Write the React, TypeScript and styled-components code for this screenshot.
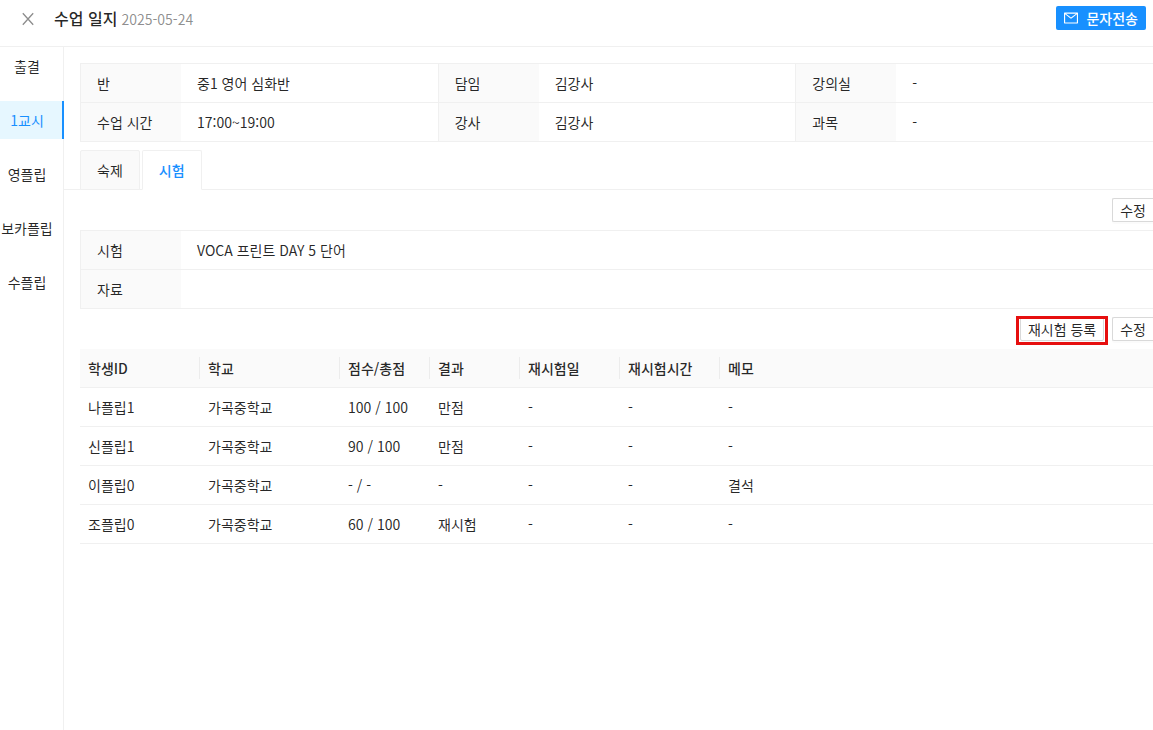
import React from "react";
import styled, { createGlobalStyle } from "styled-components";

const line = "#f0f0f0";
const blue = "#1890ff";
const shade = "#fafafa";
const ink = "rgba(0, 0, 0, 0.85)";

const GlobalStyle = createGlobalStyle`
  *, *::before, *::after { box-sizing: border-box; }
  html, body, #root { min-height: 100%; }
  body {
    margin: 0;
    background: #fff;
    color: ${ink};
    font-family: "Noto Sans CJK KR", "Noto Sans", sans-serif;
    font-size: 14px;
    line-height: 22px;
  }
  button { font: inherit; color: inherit; cursor: pointer; }
`;

const Page = styled.div`
  display: flex;
  flex-direction: column;
  min-height: 100vh;
`;

const Header = styled.header`
  display: flex;
  align-items: flex-start;
  padding: 6px 7px 15px 21px;
  border-bottom: 1px solid ${line};
`;

const CloseButton = styled.button`
  display: flex;
  padding: 0;
  margin: 6px 19px 0 0;
  border: 0;
  background: none;
  color: rgba(0, 0, 0, 0.45);
`;

const Heading = styled.div`
  display: flex;
  align-items: baseline;
  flex: 1;
  gap: 4px;
  line-height: 24px;
`;

const Title = styled.h1`
  margin: 0;
  font-size: 16px;
  font-weight: 500;
`;

const DateText = styled.time`
  color: rgba(0, 0, 0, 0.45);
`;

const SendButton = styled.button`
  display: flex;
  align-items: center;
  gap: 8px;
  height: 24px;
  padding: 0 8px;
  border: 0;
  border-radius: 2px;
  background: ${blue};
  color: #fff;
  font-weight: 500;
  white-space: nowrap;
`;

const Body = styled.div`
  display: flex;
  flex: 1;
`;

const SideNav = styled.nav`
  display: flex;
  flex-direction: column;
  gap: 16px;
  flex: 0 0 64px;
  box-shadow: inset -1px 0 ${line};
`;

const SideItem = styled.button<{ $active?: boolean }>`
  height: 38px;
  padding: 0 8px 0 0;
  border: 0;
  border-right: 2px solid ${(p) => (p.$active ? blue : "transparent")};
  background: ${(p) => (p.$active ? "#e6f7ff" : "transparent")};
  color: ${(p) => (p.$active ? blue : "inherit")};
  white-space: nowrap;
`;

const Main = styled.main`
  flex: 1;
  min-width: 0;
  padding-top: 16px;
`;

const Section = styled.section`
  padding-left: 16px;
`;

const InfoTable = styled.table`
  width: 100%;
  table-layout: fixed;
  border-spacing: 0;
  border-top: 1px solid ${line};
`;

const InfoLabel = styled.th`
  width: 101px;
  height: 39px;
  padding: 0 16px;
  border-left: 1px solid ${line};
  border-bottom: 1px solid ${line};
  background: ${shade};
  font-weight: 400;
  text-align: left;
`;

const InfoValue = styled.td`
  padding: 0 16px;
  border-bottom: 1px solid ${line};
`;

const TabList = styled.div`
  display: flex;
  gap: 2px;
  margin-top: 8px;
  padding-left: 16px;
  box-shadow: inset 0 -1px ${line};
`;

const Tab = styled.button<{ $active?: boolean }>`
  height: 40px;
  padding: 0 16px;
  border: 1px solid ${line};
  border-bottom-color: ${(p) => (p.$active ? "#fff" : line)};
  border-radius: 2px 2px 0 0;
  background: ${(p) => (p.$active ? "#fff" : shade)};
  color: ${(p) => (p.$active ? blue : "inherit")};
  font-weight: ${(p) => (p.$active ? 500 : 400)};
`;

const Actions = styled.div`
  display: flex;
  justify-content: flex-end;
  gap: 8px;
  padding: 8px 0;
`;

const SmallButton = styled.button<{ $flush?: boolean }>`
  height: 24px;
  padding: 0 7px;
  border: 1px solid #d9d9d9;
  border-right-width: ${(p) => (p.$flush ? "0" : "1px")};
  border-radius: ${(p) => (p.$flush ? "2px 0 0 2px" : "2px")};
  background: #fff;
  box-shadow: 0 2px 0 rgba(0, 0, 0, 0.016);
  white-space: nowrap;
`;

const Highlight = styled.div`
  position: relative;
  display: flex;

  &::after {
    content: "";
    position: absolute;
    inset: -1px -4px -4px;
    border: 3px solid #e60f0f;
    pointer-events: none;
  }
`;

const ScoreTable = styled.table`
  width: 100%;
  table-layout: fixed;
  border-spacing: 0;
`;

const HeadCell = styled.th<{ $width?: number }>`
  width: ${(p) => (p.$width ? `${p.$width}px` : "auto")};
  height: 39px;
  padding: 0 8px;
  border-bottom: 1px solid ${line};
  background: ${shade};
  font-weight: 500;
  text-align: left;
  white-space: nowrap;

  &:not(:last-child) {
    padding-right: 0;
  }
`;

const HeadText = styled.div<{ $divided: boolean }>`
  border-right: ${(p) => (p.$divided ? "1px solid #ececec" : "0")};
`;

const Cell = styled.td`
  height: 39px;
  padding: 0 8px;
  border-bottom: 1px solid ${line};
  white-space: nowrap;
`;

const CloseIcon = () => (
  <svg width="14" height="14" viewBox="0 0 14 14" fill="none" stroke="currentColor" strokeWidth="1.3" aria-hidden="true">
    <path d="M1.8 1.2 12.2 12.8M12.2 1.2 1.8 12.8" />
  </svg>
);

const MailIcon = () => (
  <svg width="14" height="14" viewBox="64 64 896 896" fill="currentColor" aria-hidden="true">
    <path d="M928 160H96c-17.700 0-32 14.300-32 32v640c0 17.700 14.300 32 32 32h832c17.700 0 32-14.300 32-32V192c0-17.700-14.300-32-32-32zm-40 110.800V792H136V270.800l-27.600-21.500 39.300-50.500 42.800 33.300h643.100l42.800-33.300 39.300 50.500-27.700 21.500zM833.600 232L512 482 190.400 232l-42.800-33.300-39.300 50.500 27.600 21.500 341.600 265.600a55.990 55.990 0 0 0 68.700 0L888 270.800l27.600-21.500-39.300-50.500-42.700 33.200z" />
  </svg>
);

const sideItems = ["출결", "1교시", "영플립", "보카플립", "수플립"];

const classInfo = [
  [["반", "중1 영어 심화반"], ["담임", "김강사"], ["강의실", "-"]],
  [["수업 시간", "17:00~19:00"], ["강사", "김강사"], ["과목", "-"]],
];

const examInfo = [[["시험", "VOCA 프린트 DAY 5 단어"]], [["자료", ""]]];

const columns: { name: string; width?: number }[] = [
  { name: "학생ID", width: 120 },
  { name: "학교", width: 140 },
  { name: "점수/총점", width: 90 },
  { name: "결과", width: 90 },
  { name: "재시험일", width: 100 },
  { name: "재시험시간", width: 100 },
  { name: "메모" },
];

const students = [
  ["나플립1", "가곡중학교", "100 / 100", "만점", "-", "-", "-"],
  ["신플립1", "가곡중학교", "90 / 100", "만점", "-", "-", "-"],
  ["이플립0", "가곡중학교", "- / -", "-", "-", "-", "결석"],
  ["조플립0", "가곡중학교", "60 / 100", "재시험", "-", "-", "-"],
];

const Info = ({ rows }: { rows: string[][][] }) => (
  <InfoTable>
    <tbody>
      {rows.map((row, i) => (
        <tr key={i}>
          {row.map(([label, value]) => (
            <React.Fragment key={label}>
              <InfoLabel scope="row">{label}</InfoLabel>
              <InfoValue>{value}</InfoValue>
            </React.Fragment>
          ))}
        </tr>
      ))}
    </tbody>
  </InfoTable>
);

export default function App() {
  return (
    <>
      <GlobalStyle />
      <Page lang="ko">
        <Header>
          <CloseButton type="button" aria-label="닫기">
            <CloseIcon />
          </CloseButton>
          <Heading>
            <Title>수업 일지</Title>
            <DateText dateTime="2025-05-24">2025-05-24</DateText>
          </Heading>
          <SendButton type="button">
            <MailIcon />
            문자전송
          </SendButton>
        </Header>
        <Body>
          <SideNav>
            {sideItems.map((item) => (
              <SideItem key={item} type="button" $active={item === "1교시"}>
                {item}
              </SideItem>
            ))}
          </SideNav>
          <Main>
            <Section>
              <Info rows={classInfo} />
            </Section>
            <TabList role="tablist">
              <Tab type="button" role="tab" aria-selected={false}>
                숙제
              </Tab>
              <Tab type="button" role="tab" aria-selected $active>
                시험
              </Tab>
            </TabList>
            <Section>
              <Actions>
                <SmallButton type="button" $flush>
                  수정
                </SmallButton>
              </Actions>
              <Info rows={examInfo} />
              <Actions>
                <Highlight>
                  <SmallButton type="button">재시험 등록</SmallButton>
                </Highlight>
                <SmallButton type="button" $flush>
                  수정
                </SmallButton>
              </Actions>
              <ScoreTable>
                <thead>
                  <tr>
                    {columns.map((column, i) => (
                      <HeadCell key={column.name} scope="col" $width={column.width}>
                        <HeadText $divided={i < columns.length - 1}>{column.name}</HeadText>
                      </HeadCell>
                    ))}
                  </tr>
                </thead>
                <tbody>
                  {students.map((student) => (
                    <tr key={student[0]}>
                      {student.map((value, i) => (
                        <Cell key={i}>{value}</Cell>
                      ))}
                    </tr>
                  ))}
                </tbody>
              </ScoreTable>
            </Section>
          </Main>
        </Body>
      </Page>
    </>
  );
}
